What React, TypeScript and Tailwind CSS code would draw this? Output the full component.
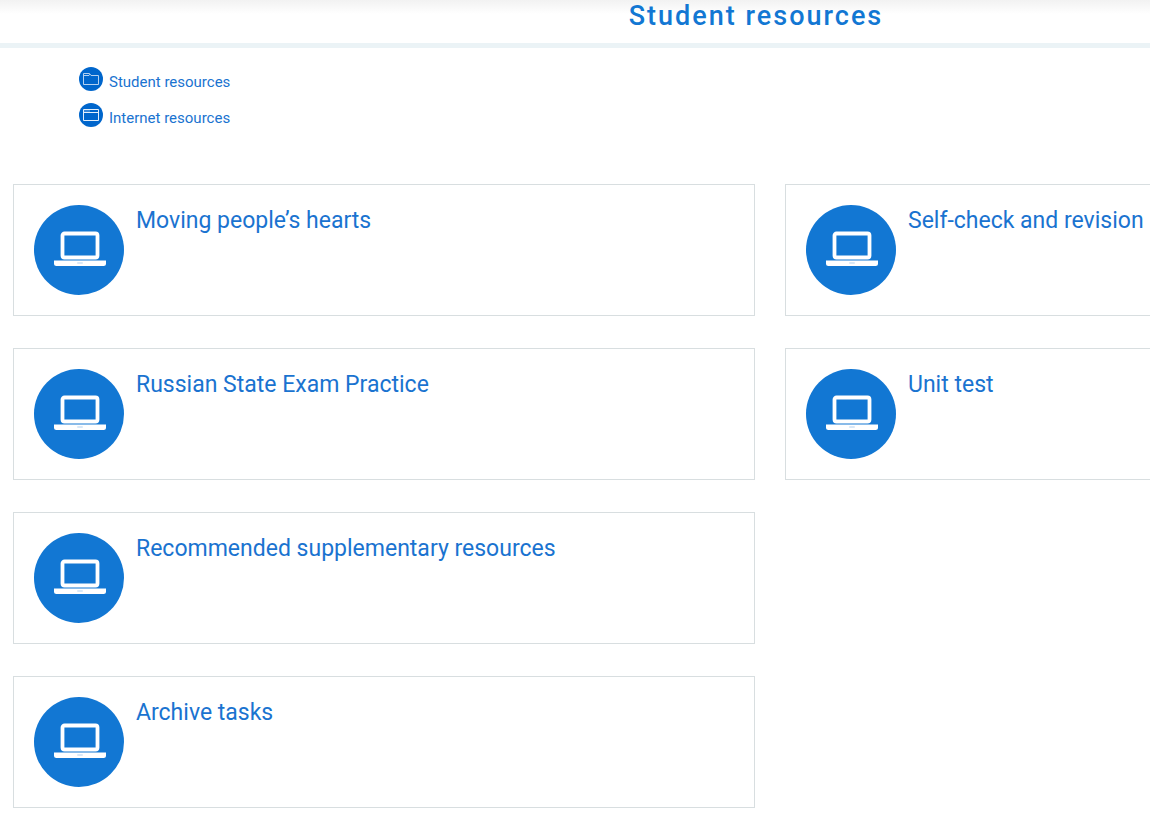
const menu = [
    { title: "Student resources", icon: "folder" },
    { title: "Internet resources", icon: "window" },
];

const sections = [
    "Moving people’s hearts",
    "Self-check and revision",
    "Russian State Exam Practice",
    "Unit test",
    "Recommended supplementary resources",
    "",
    "Archive tasks",
];

const LaptopIcon = () => (
    <svg className="w-[54px] h-[38px]" viewBox="-2 0 54 38" fill="none" aria-hidden="true">
        <rect x="8.5" y="2.5" width="35" height="24" rx="2" stroke="#fff" strokeWidth="3.8" />
        <path d="M0 29.5h52v3a2.5 2.5 0 0 1-2.5 2.5h-47A2.5 2.5 0 0 1 0 32.5z" fill="#fff" />
        <rect x="23" y="31" width="6" height="2" rx="1" fill="#d9e8f7" />
    </svg>
);

const MenuIcon: React.FC<{ name: string }> = ({ name }) => (
    <svg className="w-6 h-6 shrink-0" viewBox="0 0 24 24" fill="none" aria-hidden="true">
        <circle cx="12" cy="12" r="12" fill="#0066cc" />
        {name === "folder" ? (
            <g stroke="#b4d1f0" strokeWidth="1">
                <path d="M4.5 17.5v-11h6l1.5 2h7.5v9z" />
                <path d="M5 8.5h5l1-1.5" />
            </g>
        ) : (
            <g stroke="#e4effb" strokeWidth="1">
                <path d="M4.5 6.5h15v11h-15z" />
                <path d="M4.5 9.5h15" />
                <path d="M5 8h6" strokeOpacity="0.5" />
            </g>
        )}
    </svg>
);

const App: React.FC = () => {
    return (
        <div className="overflow-x-hidden bg-white font-['Roboto',sans-serif] text-[#1a73d0]">
            <div className="min-w-[1540px]">
                <header className="h-12 pr-7 border-b-5 border-[#ebf3f6] bg-linear-to-b from-[#f2f2f2] to-white to-[14px]">
                    <h1 className="text-[27px] leading-8 font-medium tracking-[2px] text-center text-[#1277d3]">Student resources</h1>
                </header>
                <nav className="flex flex-col items-start gap-3 pt-[19px] pl-[79px]">
                    {menu.map((item) => (
                        <a key={item.title} href="#" className="flex gap-[6px]">
                            <MenuIcon name={item.icon} />
                            <span className="pt-1 text-[15px] leading-[22px] -mb-2">{item.title}</span>
                        </a>
                    ))}
                </nav>
                <main className="grid grid-cols-2 gap-x-[30px] gap-y-8 px-[13px] pt-[57px] pb-[29px]">
                    {sections.map((title, i) =>
                        title ? (
                            <a key={i} href="#" className="flex gap-3 p-5 border border-[#d8dee0]">
                                <span className="flex items-center justify-center w-[90px] h-[90px] shrink-0 rounded-full bg-[#1277d3]">
                                    <LaptopIcon />
                                </span>
                                <h2 className="text-[23px] leading-8">{title}</h2>
                            </a>
                        ) : (
                            <div key={i} />
                        )
                    )}
                </main>
            </div>
        </div>
    );
};

export default App;
